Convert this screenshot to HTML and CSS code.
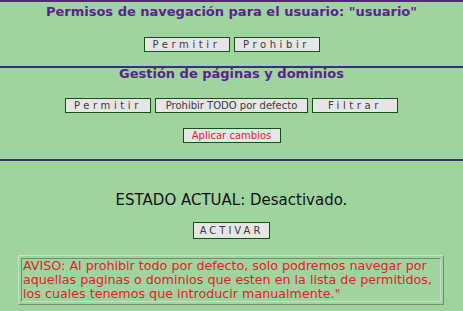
FILE: index.html
```html
<!DOCTYPE html>
<html lang="es">
<head>
    <meta charset="UTF-8">
    <title>Permisos de navegación</title>
    <link rel="stylesheet" href="styles.css">
</head>
<body>
    <div class="section first">
        <h2>Permisos de navegación para el usuario: "usuario"</h2>
        <div class="buttons">
            <button class="btn spaced">Permitir</button>
            <button class="btn spaced">Prohibir</button>
        </div>
    </div>

    <div class="section second">
        <h2>Gestión de páginas y dominios</h2>
        <div class="buttons">
            <button class="btn spaced">Permitir</button>
            <button class="btn wide">Prohibir TODO por defecto</button>
            <button class="btn spaced">Filtrar</button>
        </div>
        <div class="buttons apply-row">
            <button class="btn apply">Aplicar cambios</button>
        </div>
    </div>

    <div class="section status">
        <p class="estado">ESTADO ACTUAL: Desactivado.</p>
        <div class="buttons">
            <button class="btn activar">ACTIVAR</button>
        </div>
        <table class="aviso">
            <tr>
                <td>AVISO: Al prohibir todo por defecto, solo podremos navegar por aquellas paginas o dominios que esten en la lista de permitidos, los cuales tenemos que introducir manualmente."</td>
            </tr>
        </table>
    </div>
</body>
</html>
```

FILE: styles.css
```css
body { margin: 0; background: #9fd49f; font-family: "DejaVu Sans", sans-serif; overflow: hidden; }
.section { border-top: 2px solid #3b2d7a; }
.section.first { border-top-color: #5a1f8f; padding-top: 1px; height: 63px; }
.section.second { height: 91px; }
h2 { margin: 0; font-size: 13px; font-weight: bold; color: #5b2192; text-align: center; line-height: 17px; }
.second h2 { line-height: 12px; }
.buttons { display: flex; justify-content: center; gap: 4px; margin-top: 17px; }
.second .buttons { margin-top: 18px; }
.second .apply-row { margin-top: 15px; }
.btn { font-family: "DejaVu Sans", sans-serif; font-size: 10px; color: #3a3a3a; background: #e6e6e6; border: 1px solid #145214; height: 15px; padding: 0; line-height: 13px; }
.spaced { width: 86px; letter-spacing: 3.6px; }
.wide { width: 153px; letter-spacing: 0; }
.apply { width: 98px; color: #e0202a; }
.section.status { padding-top: 22px; }
.estado { margin: 0; text-align: center; font-size: 15px; color: #111; line-height: 34px; }
.activar { width: 77px; height: 17px; letter-spacing: 3px; }
.status .buttons { margin-top: 5px; }
.aviso { margin: 16px 18px 0; border: 1px solid #c4e0c4; border-right-color: #6f8f6f; border-bottom-color: #6f8f6f; border-spacing: 2px; width: 426px; }
.aviso td { border: 1px solid #6f8f6f; border-right-color: #c4e0c4; border-bottom-color: #c4e0c4; padding: 0 1px; font-size: 12.7px; line-height: 14px; color: #e0202a; }
```
